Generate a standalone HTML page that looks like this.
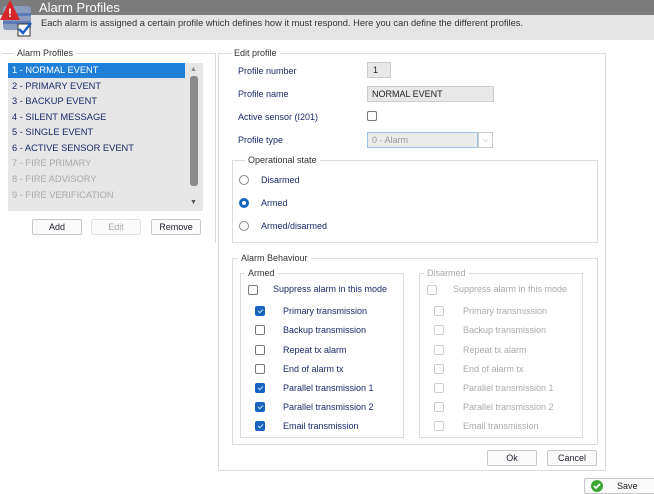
<!DOCTYPE html><html><head><style>
*{margin:0;padding:0;box-sizing:border-box}
body{width:654px;height:493px;background:#fff;font-family:"Liberation Sans",sans-serif;font-size:9px;color:#1a2a6a;position:relative;overflow:hidden}
.a{position:absolute;white-space:nowrap}
.fr{position:absolute;border:1px solid #dcdcdc}
.lg{position:absolute;background:#fff;padding:0 3px;color:#333}
.btn{position:absolute;height:16px;border:1px solid #c8c8c8;border-radius:2px;background:#fafafa;text-align:center;line-height:14px;color:#223;font-size:9px}
.cb{position:absolute;width:10px;height:10px;border:1px solid #777;border-radius:2px;background:#fff}
.cb.on{background:#1565c0;border-color:#1565c0}
.cb.on::after{content:"";position:absolute;left:3px;top:1px;width:2px;height:4px;border:solid #cfe0ff;border-width:0 1px 1px 0;transform:rotate(45deg)}
.cb.dis{border-color:#ccc}
.rd{position:absolute;width:10px;height:10px;border:1px solid #888;border-radius:50%;background:#fff}
.row{position:absolute;left:8px;width:177px;height:15px;line-height:15px;padding-left:4px;font-size:9.3px}
.dis{color:#aaa}
</style></head><body>
<div class="a" style="left:0;top:0;width:654px;height:15px;background:#7b7b7b"></div>
<div class="a" style="left:0;top:15px;width:654px;height:25px;background:#e4e4e4"></div>
<svg class="a" style="left:0;top:0" width="34" height="38" viewBox="0 0 34 38">
<rect x="3" y="6" width="28" height="24" rx="3" fill="#8a9bbd"/><rect x="3" y="13" width="28" height="3" fill="#5a7ab8"/><rect x="3" y="21" width="28" height="3" fill="#5a7ab8"/>
<rect x="18" y="24" width="12" height="12" fill="#fff" stroke="#333"/><path d="M19 29l4 4 8-10" stroke="#1d5fc0" stroke-width="2.5" fill="none"/>
<path d="M10 0L0 20h20z" fill="#d6262a"/><text x="10" y="17" font-size="12" font-weight="bold" fill="#fff" text-anchor="middle" font-family="Liberation Sans">!</text></svg>
<div class="a" style="left:39px;top:0;font-size:13px;color:#fff;line-height:15px">Alarm Profiles</div>
<div class="a" style="left:41px;top:18px;font-size:9.3px;color:#333">Each alarm is assigned a certain profile which defines how it must respond. Here you can define the different profiles.</div>

<div class="fr" style="left:2px;top:53px;width:214px;height:190px;border-left:none;border-bottom:none"></div>
<div class="lg" style="left:14px;top:48px">Alarm Profiles</div>
<div class="a" style="left:8px;top:63px;width:195px;height:148px;background:#e6e6e6"></div>
<div class="row" style="top:63px;background:#1e7fd8;color:#fff">1 - NORMAL EVENT</div>
<div class="row" style="top:79px">2 - PRIMARY EVENT</div>
<div class="row" style="top:94px">3 - BACKUP EVENT</div>
<div class="row" style="top:110px">4 - SILENT MESSAGE</div>
<div class="row" style="top:125px">5 - SINGLE EVENT</div>
<div class="row" style="top:141px">6 - ACTIVE SENSOR EVENT</div>
<div class="row dis" style="top:156px">7 - FIRE PRIMARY</div>
<div class="row dis" style="top:172px">8 - FIRE ADVISORY</div>
<div class="row dis" style="top:188px">9 - FIRE VERIFICATION</div>
<div class="a" style="left:190px;top:76px;width:8px;height:110px;background:#8a8a8a;border-radius:3px"></div>
<div class="a" style="left:190px;top:66px;font-size:7px;color:#888">▲</div>
<div class="a" style="left:190px;top:199px;font-size:7px;color:#555">▼</div>
<div class="btn" style="left:32px;top:219px;width:50px">Add</div>
<div class="btn dis" style="left:91px;top:219px;width:50px;border-color:#e0e0e0;color:#aaa">Edit</div>
<div class="btn" style="left:151px;top:219px;width:50px">Remove</div>

<div class="fr" style="left:218px;top:53px;width:388px;height:418px"></div>
<div class="lg" style="left:231px;top:48px">Edit profile</div>
<div class="a" style="left:238px;top:66px">Profile number</div>
<div class="a" style="left:238px;top:89px">Profile name</div>
<div class="a" style="left:238px;top:112px">Active sensor (I201)</div>
<div class="a" style="left:238px;top:135px">Profile type</div>
<div class="a" style="left:367px;top:62px;width:24px;height:16px;background:#e8e8e8;border:1px solid #ccc;padding-left:5px;line-height:14px;color:#222">1</div>
<div class="a" style="left:367px;top:86px;width:127px;height:16px;background:#e8e8e8;border:1px solid #ccc;padding-left:4px;line-height:14px;color:#222">NORMAL EVENT</div>
<div class="cb" style="left:367px;top:111px"></div>
<div class="a" style="left:367px;top:132px;width:111px;height:16px;background:#ebebeb;border:1px solid #9cc0e6;padding-left:4px;line-height:14px;color:#999">0 - Alarm</div>
<div class="a" style="left:478px;top:132px;width:15px;height:16px;border:1px solid #ccc;text-align:center;color:#aaa;line-height:13px;font-size:8px">⌵</div>

<div class="fr" style="left:232px;top:160px;width:366px;height:83px"></div>
<div class="lg" style="left:245px;top:155px">Operational state</div>
<div class="rd" style="left:239px;top:175px"></div><div class="a" style="left:261px;top:175px">Disarmed</div>
<div class="rd" style="left:239px;top:198px;border:3px solid #1565c0"></div><div class="a" style="left:261px;top:198px">Armed</div>
<div class="rd" style="left:239px;top:221px"></div><div class="a" style="left:261px;top:221px">Armed/disarmed</div>

<div class="fr" style="left:232px;top:258px;width:366px;height:187px"></div>
<div class="lg" style="left:238px;top:253px">Alarm Behaviour</div>
<div class="fr" style="left:240px;top:273px;width:164px;height:165px"></div>
<div class="lg" style="left:245px;top:268px">Armed</div>
<div class="fr" style="left:419px;top:273px;width:164px;height:165px"></div>
<div class="lg dis" style="left:424px;top:268px;color:#aaa">Disarmed</div>

<div class="cb" style="left:248px;top:285px"></div><div class="a" style="left:273px;top:284px">Suppress alarm in this mode</div>
<div class="cb dis" style="left:427px;top:285px"></div><div class="a dis" style="left:453px;top:284px">Suppress alarm in this mode</div>

<div class="cb on" style="left:255px;top:306px"></div><div class="a" style="left:283px;top:306px">Primary transmission</div>
<div class="cb" style="left:255px;top:325px"></div><div class="a" style="left:283px;top:325px">Backup transmission</div>
<div class="cb" style="left:255px;top:345px"></div><div class="a" style="left:283px;top:345px">Repeat tx alarm</div>
<div class="cb" style="left:255px;top:364px"></div><div class="a" style="left:283px;top:364px">End of alarm tx</div>
<div class="cb on" style="left:255px;top:383px"></div><div class="a" style="left:283px;top:383px">Parallel transmission 1</div>
<div class="cb on" style="left:255px;top:402px"></div><div class="a" style="left:283px;top:402px">Parallel transmission 2</div>
<div class="cb on" style="left:255px;top:421px"></div><div class="a" style="left:283px;top:421px">Email transmission</div>

<div class="cb dis" style="left:434px;top:306px"></div><div class="a dis" style="left:463px;top:306px">Primary transmission</div>
<div class="cb dis" style="left:434px;top:325px"></div><div class="a dis" style="left:463px;top:325px">Backup transmission</div>
<div class="cb dis" style="left:434px;top:345px"></div><div class="a dis" style="left:463px;top:345px">Repeat tx alarm</div>
<div class="cb dis" style="left:434px;top:364px"></div><div class="a dis" style="left:463px;top:364px">End of alarm tx</div>
<div class="cb dis" style="left:434px;top:383px"></div><div class="a dis" style="left:463px;top:383px">Parallel transmission 1</div>
<div class="cb dis" style="left:434px;top:402px"></div><div class="a dis" style="left:463px;top:402px">Parallel transmission 2</div>
<div class="cb dis" style="left:434px;top:421px"></div><div class="a dis" style="left:463px;top:421px">Email transmission</div>

<div class="btn" style="left:487px;top:450px;width:50px">Ok</div>
<div class="btn" style="left:547px;top:450px;width:50px">Cancel</div>

<div class="btn" style="left:584px;top:478px;width:72px;height:16px"></div>
<svg class="a" style="left:591px;top:480px" width="12" height="12"><circle cx="6" cy="6" r="6" fill="#3aa635"/><path d="M3 6l2 2 4-4" stroke="#fff" stroke-width="1.8" fill="none"/></svg>
<div class="a" style="left:617px;top:481px;color:#222">Save</div>
</body></html>
